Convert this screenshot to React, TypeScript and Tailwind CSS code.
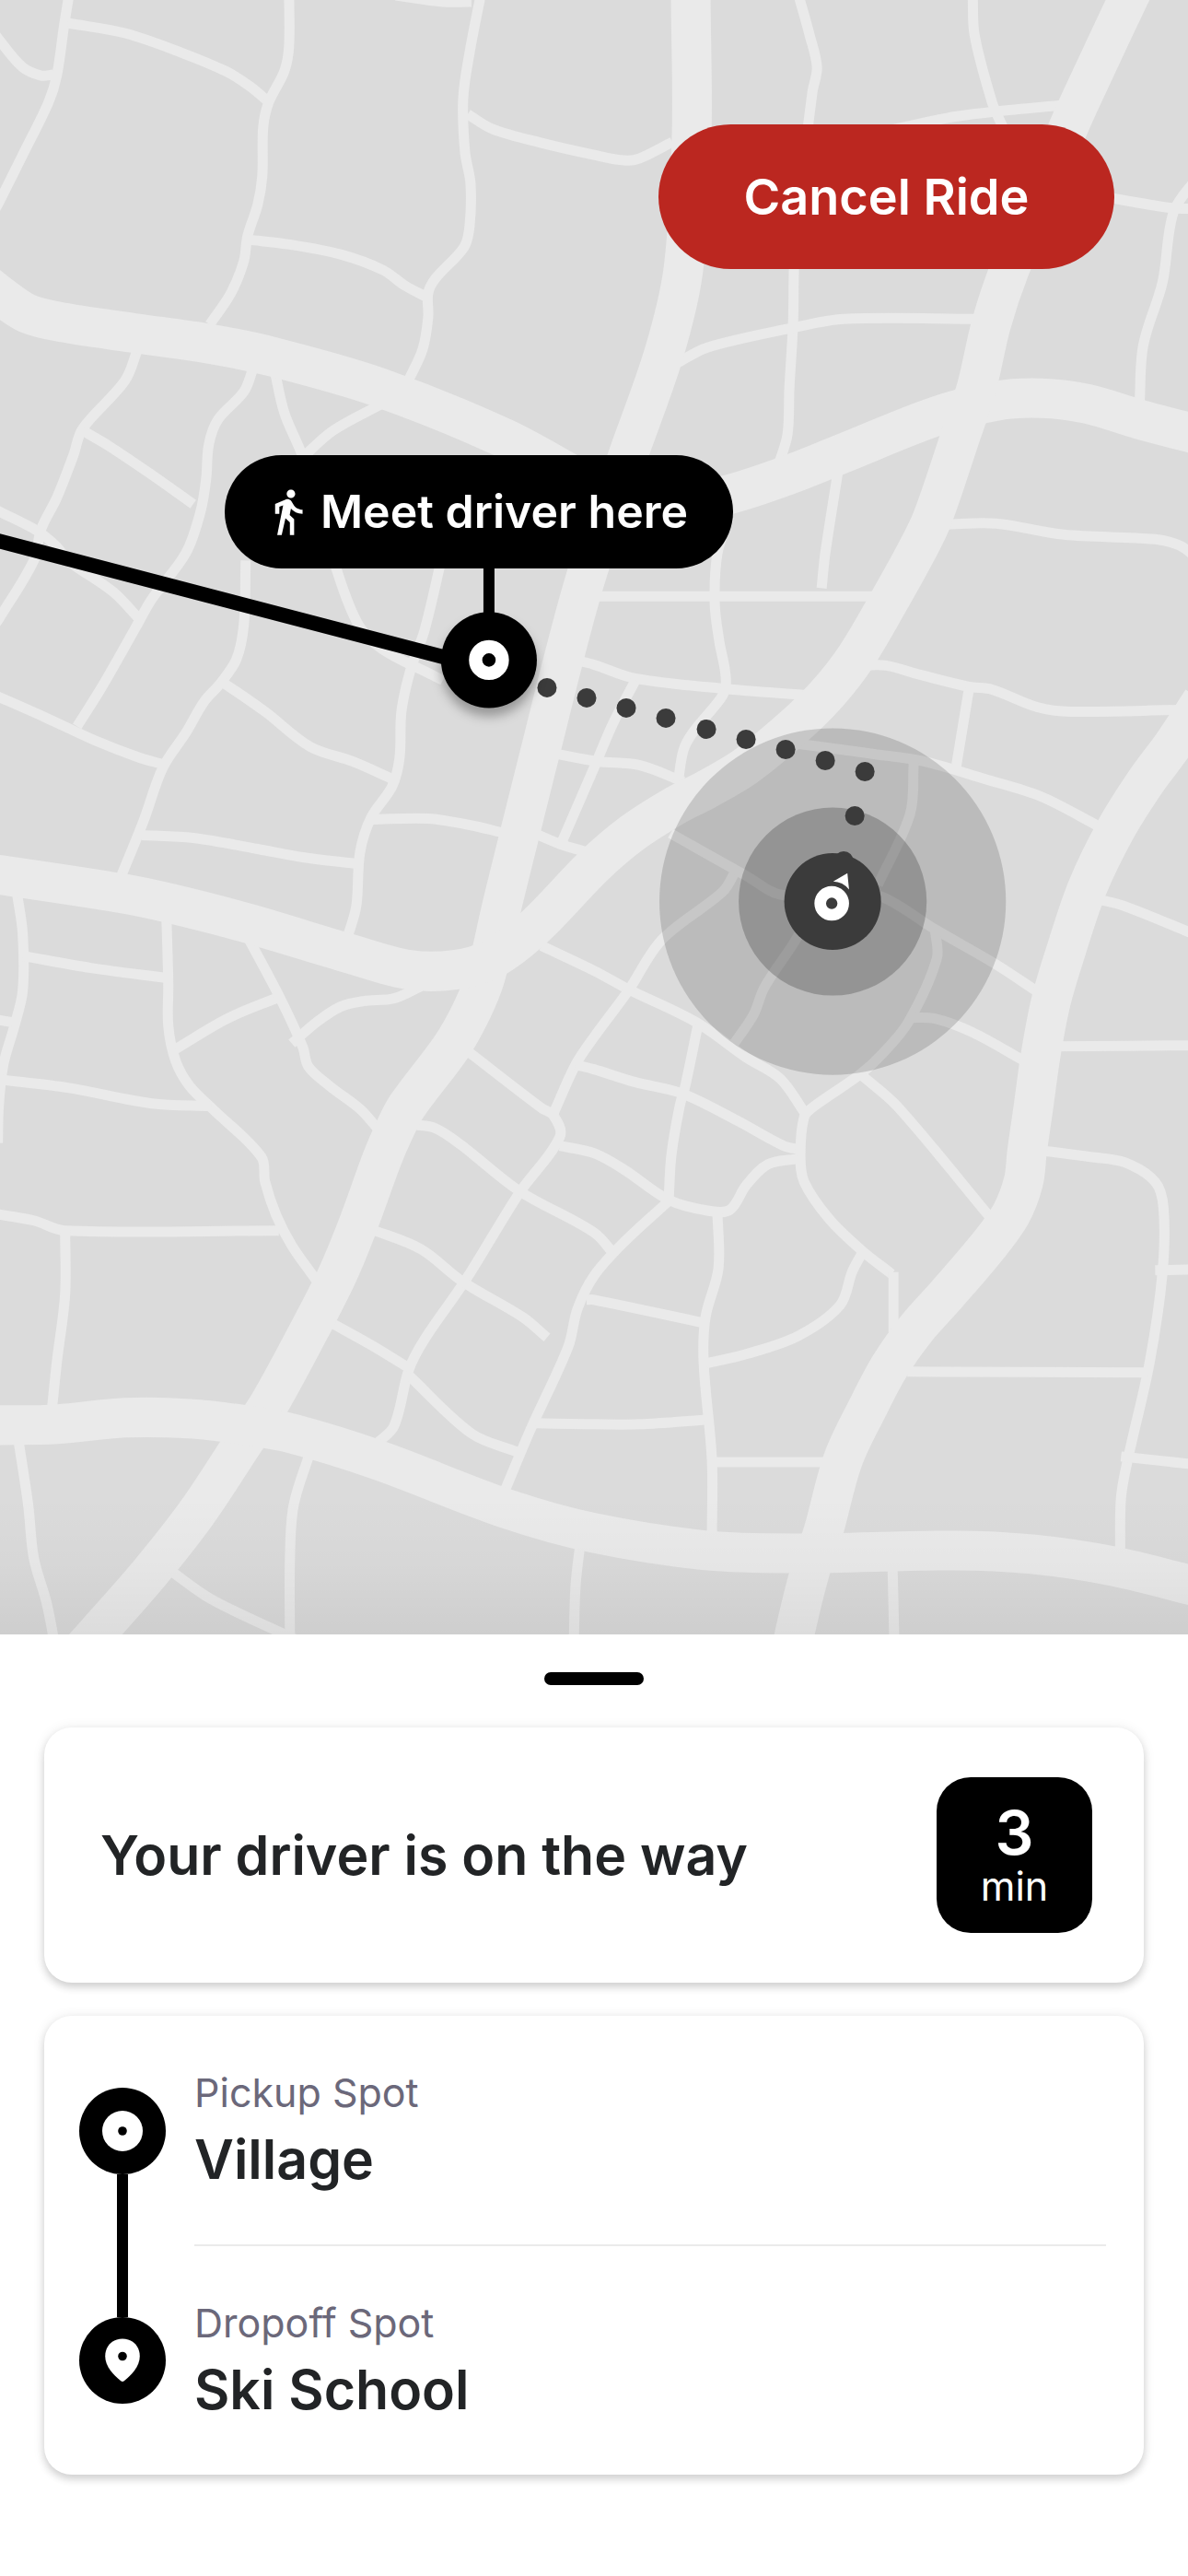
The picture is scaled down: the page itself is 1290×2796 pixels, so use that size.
import type { ReactNode } from "react";
import { MdDirectionsWalk } from "react-icons/md";

const majorRoads = [
  "-20,304 0,320 30,340 70,350 144,361 228,373 296,387 411,420 547,475 640,525 700,552 785,538 851,517 912,493 1015,452 1081,435 1130,432 1180,438 1237,455 1310,474",
  "750,-20 750,0 751,145 742,292 721,383 682,494 639,617 615,703 587,814 564,906 545,983 527,1060 512,1097 490,1136 442,1200 427,1229 415,1257 388,1331 366,1384 337,1441 293,1522 263,1567 214,1641 163,1706 106,1771 80,1800",
  "-20,947 0,949 132,969 185,980 267,1001 378,1034 444,1052 494,1052 535,1040 580,1006 645,939 686,904 733,874 768,856 810,831 859,791 896,755 929,713 964,654 994,600 1012,563 1042,475 1060,421 1076,352 1096,292 1157,145 1172,111 1224,0 1234,-20",
  "1305,760 1274,807 1243,849 1211,900 1180,964 1157,1032 1141,1086 1130,1143 1122,1200 1115,1249 1111,1282 1097,1318 1070,1355 1028,1404 995,1441 966,1482 942,1527 915,1584 894,1661 879,1706 863,1771 858,1800",
  "-20,1546 0,1546 62,1545 136,1538 206,1539 267,1546 317,1555 411,1584 551,1637 645,1663 768,1682 867,1685 1036,1682 1120,1686 1208,1699 1310,1724",
];

const minorRoads = [
  "76,-10 70,27 62,82 53,111 25,168 0,218 -10,236",
  "-10,30 0,44 25,73 45,82 58,81",
  "74,25 136,36 197,57 247,78 272,94 290,109",
  "314,-10 314,50 309,77 292,111 286,138 285,191 280,222 269,256 265,283 251,318 228,352",
  "270,260 313,265 370,276 416,293 440,310 465,323",
  "522,-5 510,57 503,107 505,165 511,199 510,245 504,268 473,302 465,318 465,344 459,379 444,412",
  "508,124 535,140 588,155 645,168 678,174 694,172 730,154",
  "430,-5 481,2 512,2",
  "150,378 136,413 90,465 80,494 62,540 45,574 37,608 0,670 -8,682",
  "90,467 119,484 165,515 210,547",
  "-10,550 0,555 41,576 62,593 74,608 123,642 152,672",
  "275,400 265,425 237,455 227,482 224,520 218,555 202,600 165,650 148,680 111,745 84,788",
  "298,400 309,448 329,496 366,619 389,677 415,704 469,732 481,738",
  "415,438 362,467 329,496",
  "267,608 265,677 257,715 239,742 222,761 202,795 177,833 156,891 132,950",
  "-10,752 49,778 103,803 152,822 177,829",
  "239,738 288,772 337,810 383,826 426,845",
  "481,600 461,684 446,726 436,772 434,822 426,853 403,887 391,925 387,983 377,1018",
  "403,889 465,888 510,895 545,903",
  "154,906 210,909 280,921 329,930 387,937",
  "19,970 25,1013 25,1075 16,1113 4,1155 -1,1200 -2,1240",
  "-10,1105 14,1109",
  "25,1037 99,1050 181,1061",
  "181,995 183,1067 183,1113 191,1151 206,1178 230,1202 284,1255 288,1282 300,1318 317,1351 343,1388",
  "191,1138 247,1105 302,1082",
  "0,1171 74,1180 165,1197 230,1200",
  "270,1018 304,1082 329,1136 335,1157 358,1178 391,1203 410,1224",
  "317,1132 345,1108 370,1092 395,1086 428,1083 457,1070",
  "510,1142 588,1202 601,1210 608,1233 564,1294 506,1388 461,1453 444,1486 428,1547 409,1566",
  "588,1026 645,1053 682,1073 756,1109 810,1147 847,1170 873,1206",
  "799,944 785,967 719,1019 682,1075 645,1125 625,1155 601,1208",
  "625,1155 645,1160 690,1174 740,1186 801,1216 851,1243 869,1247",
  "758,1111 744,1178 738,1200 729,1253 726,1302",
  "625,716 645,721 690,736 785,747 875,754",
  "600,817 649,826 694,830 742,848",
  "690,738 666,784 645,833 609,916",
  "576,902 609,916 640,925",
  "640,647 955,647",
  "792,560 779,600 776,654 781,696 787,726 788,744 783,757 752,795 742,814 736,850",
  "910,510 896,600 892,638",
  "935,722 962,722 999,732 1052,745 1077,748 1126,767 1163,772 1280,770",
  "1052,747 1038,832",
  "860,806 949,818 1003,826 1069,845 1130,864 1192,896",
  "992,828 988,883 953,960",
  "728,904 810,950 850,971 904,962 958,973 1015,1008 1081,1046 1128,1077",
  "880,990 863,1021 830,1071 818,1101 797,1132",
  "1015,1008 1017,1040 986,1109 958,1143 933,1166 884,1200 873,1212 869,1253 873,1282 900,1322 935,1356 968,1382",
  "970,1380 970,1445",
  "986,1104 1015,1105 1056,1120 1112,1151",
  "935,1166 974,1200 1077,1323",
  "1190,975 1221,983 1300,1015",
  "1145,1135 1300,1134",
  "1025,569 1081,568 1155,580 1254,585 1281,592 1300,606",
  "867,-5 879,38 887,73 882,100 864,250 862,292 861,352 857,421 855,471 845,505",
  "735,394 768,377 859,356 916,346 1065,346",
  "1056,-5 1058,38 1077,111 1087,134 1100,160",
  "950,145 1028,128 1081,121 1155,114",
  "1190,212 1274,226 1300,226",
  "1300,192 1274,230 1262,306 1241,375 1237,440",
  "-10,1316 37,1324 71,1335 303,1335",
  "71,1335 71,1404 62,1478 57,1526",
  "20,1560 31,1633 37,1690 51,1739 60,1785",
  "337,1575 319,1633 315,1690 315,1785",
  "183,1702 230,1735 320,1778",
  "448,1220 473,1224 502,1243 564,1292 645,1337 668,1362",
  "608,1243 645,1251 678,1269 727,1302 773,1314 793,1312 810,1286 834,1263 867,1257",
  "402,1333 457,1355 502,1390 568,1429 594,1451",
  "358,1434 403,1459 444,1484",
  "444,1492 512,1555 561,1575",
  "727,1302 678,1347 645,1384 627,1420 617,1461 576,1551 547,1620",
  "582,1544 645,1545 694,1545 768,1540",
  "637,1410 645,1410 764,1435",
  "630,1675 625,1720 623,1785",
  "779,1316 780,1376 766,1429 764,1478 773,1584 773,1665",
  "935,1361 925,1380 912,1416 867,1449 810,1469 767,1479",
  "773,1586 900,1586",
  "969,1700 971,1785",
  "1130,1248 1184,1255 1221,1261 1254,1282 1263,1310 1262,1380 1248,1478 1225,1580 1217,1624 1216,1682",
  "1254,1378 1300,1377",
  "985,1488 1246,1489",
  "1217,1580 1300,1589",
];

const routeDots = [
  [594, 746],
  [637, 757],
  [680, 768],
  [723, 779],
  [767, 791],
  [810, 802],
  [853, 813],
  [896, 825],
  [939, 837],
  [928, 885],
  [916, 934],
];

/** Turns "x,y x,y ..." into a smooth curve through every point. */
function smoothPath(road: string) {
  const pts = road.split(" ").map((pair) => pair.split(",").map(Number));
  let d = `M${pts[0][0]} ${pts[0][1]}`;
  for (let i = 0; i < pts.length - 1; i++) {
    const p0 = pts[i - 1] ?? pts[i];
    const p1 = pts[i];
    const p2 = pts[i + 1];
    const p3 = pts[i + 2] ?? p2;
    // cap the tangents by segment length so short segments do not loop
    const len = Math.hypot(p2[0] - p1[0], p2[1] - p1[1]);
    const t1 = len / (Math.hypot(p2[0] - p0[0], p2[1] - p0[1]) * 3 || 1);
    const t2 = len / (Math.hypot(p3[0] - p1[0], p3[1] - p1[1]) * 3 || 1);
    const c1 = [p1[0] + (p2[0] - p0[0]) * t1, p1[1] + (p2[1] - p0[1]) * t1];
    const c2 = [p2[0] - (p3[0] - p1[0]) * t2, p2[1] - (p3[1] - p1[1]) * t2];
    d += `C${c1.join(" ")} ${c2.join(" ")} ${p2.join(" ")}`;
  }
  return d;
}

function RideMap() {
  return (
    <svg
      viewBox="0 0 1290 1773"
      preserveAspectRatio="xMidYMin slice"
      className="absolute inset-0 h-full w-full"
      aria-hidden
    >
      <g fill="none" stroke="#eaeaea" strokeLinejoin="round">
        <g strokeWidth="11">
          {minorRoads.map((road) => (
            <path key={road} d={smoothPath(road)} />
          ))}
        </g>
        <g strokeWidth="43">
          {majorRoads.map((road) => (
            <path key={road} d={smoothPath(road)} />
          ))}
        </g>
      </g>

      {/* driver position with its two halos */}
      <circle cx="904" cy="978" r="188" fill="#3b3b3b" fillOpacity="0.2" />
      <circle cx="904" cy="978" r="102" fill="#3b3b3b" fillOpacity="0.3" />
      {routeDots.map(([x, y]) => (
        <circle key={`${x}-${y}`} cx={x} cy={y} r="10.5" fill="#3b3b3b" />
      ))}
      <circle cx="904" cy="978" r="52.5" fill="#3b3b3b" />
      <circle cx="903" cy="980" r="12.5" fill="none" stroke="#fff" strokeWidth="12.6" />
      <path d="M904.6 956.3L920 947.3L921.8 965Q915 956.6 904.6 956.3Z" fill="#fff" />

      {/* route and pickup point */}
      <path d="M-10 584.5L531 725.5" stroke="#000" strokeWidth="16" />
      <path d="M531 610V670" stroke="#000" strokeWidth="12" />
      <circle
        cx="531"
        cy="716"
        r="52"
        className="drop-shadow-[0_9px_6px_rgba(0,0,0,0.3)]"
      />
      <circle cx="531" cy="716" r="14.5" fill="none" stroke="#fff" strokeWidth="14.4" />
    </svg>
  );
}

function PickupIcon() {
  return (
    <svg viewBox="0 0 94 94" className="block size-[94px]" aria-hidden>
      <circle cx="47" cy="47" r="47" />
      <circle cx="47" cy="47" r="22" fill="#fff" />
      <circle cx="47" cy="47" r="4.8" />
    </svg>
  );
}

function DropoffIcon() {
  return (
    <svg viewBox="0 0 94 94" className="block size-[94px]" aria-hidden>
      <circle cx="47" cy="47" r="47" />
      <path
        d="M47 23.5C36 23.5 28.2 31.5 28.2 42.5C28.2 53.5 37.5 63 45.2 69.3Q47 70.7 48.8 69.3C56.5 63 65.8 53.5 65.8 42.5C65.8 31.5 58 23.5 47 23.5Z"
        fill="#fff"
      />
      <circle cx="47" cy="42.5" r="4.8" />
    </svg>
  );
}

type StopProps = {
  label: string;
  name: string;
  icon: ReactNode;
  last?: boolean;
};

function Stop({ label, name, icon, last = false }: StopProps) {
  return (
    <li className="flex gap-[31px] pr-[41px] pl-[38px]">
      <div className="flex flex-col items-center">
        <span className={last ? "w-3 flex-1 bg-black" : "w-3 flex-1"} />
        {icon}
        <span className={last ? "w-3 flex-1" : "w-3 flex-1 bg-black"} />
      </div>
      <div
        className={
          last
            ? "flex flex-1 flex-col gap-[10px] py-14"
            : "flex flex-1 flex-col gap-[10px] border-b-2 border-[#ebebeb] py-14"
        }
      >
        <p className="text-[43px] leading-[54px] text-[#6b687a]">{label}</p>
        <p className="text-[59px] leading-[72px] font-semibold">{name}</p>
      </div>
    </li>
  );
}

const card =
  "rounded-[30px] bg-white shadow-[0_5px_8px_rgba(0,0,0,0.14),0_1px_14px_rgba(0,0,0,0.09)]";

export default function App() {
  return (
    <div className="flex min-h-screen flex-col bg-white font-['Inter',sans-serif] text-[#222426]">
      <main className="relative flex-1 overflow-hidden bg-[#dbdbdb]">
        <RideMap />
        <div className="absolute inset-x-0 bottom-0 h-[150px] bg-linear-to-b from-transparent via-black/2 to-black/6" />
        <button
          type="button"
          className="absolute top-[135px] right-[80px] h-[157px] w-[495px] rounded-full bg-[#bb2720] text-[54px] font-semibold text-white"
        >
          Cancel Ride
        </button>
        <div className="absolute top-[494px] left-[244px] flex h-[123px] w-[552px] items-center gap-2 rounded-full bg-black pl-[41px] text-[50px] font-semibold whitespace-nowrap text-white">
          <MdDirectionsWalk className="size-[55px] shrink-0" aria-hidden />
          Meet driver here
        </div>
      </main>

      <section className="px-12 pt-[41px] pb-[110px]">
        <div className="mx-auto h-[14px] w-[108px] rounded-full bg-black" />
        <div
          className={`mt-[46px] flex items-center justify-between py-[54px] pr-[56px] pl-[61px] ${card}`}
        >
          <h1 className="text-[59px] leading-[72px] font-semibold">
            Your driver is on the way
          </h1>
          <div className="flex size-[169px] flex-col items-center rounded-[37px] bg-black pt-6 text-white">
            <span className="text-[66px] leading-[72px] font-semibold">3</span>
            <span className="text-[43px] leading-[44px]">min</span>
          </div>
        </div>
        <ul className={`mt-9 ${card}`}>
          <Stop label="Pickup Spot" name="Village" icon={<PickupIcon />} />
          <Stop label="Dropoff Spot" name="Ski School" icon={<DropoffIcon />} last />
        </ul>
      </section>
    </div>
  );
}
